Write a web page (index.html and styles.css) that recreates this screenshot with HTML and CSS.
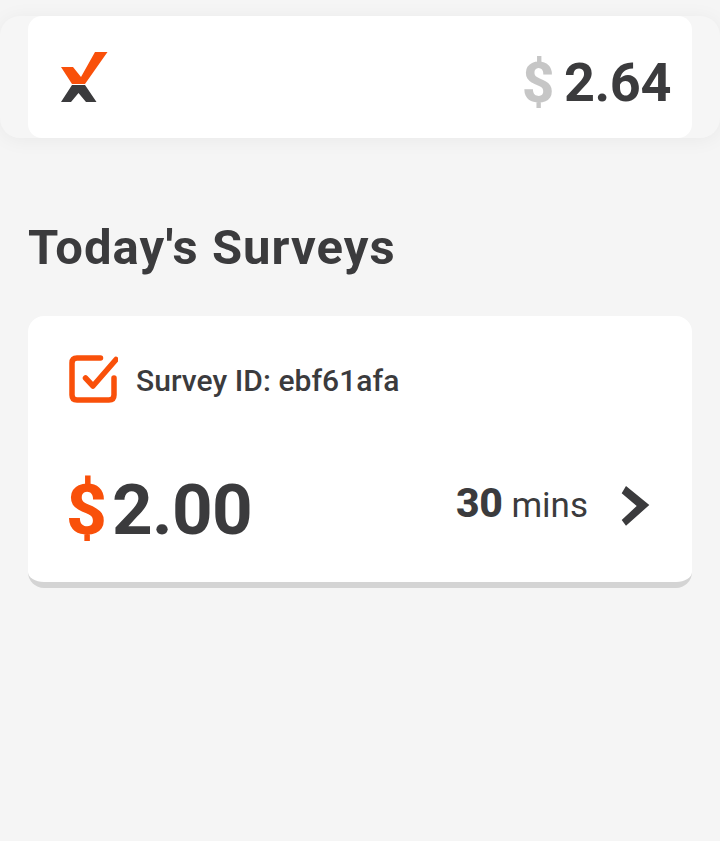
FILE: index.html
```html
<!DOCTYPE html>
<html lang="en">
<head>
<meta charset="utf-8">
<title>Today's Surveys</title>
<link rel="stylesheet" href="styles.css">
</head>
<body>
<header class="band">
  <div class="top-card">
    <svg class="logo" width="48" height="52" viewBox="60 51 48 52" aria-hidden="true">
      <path class="dark" d="M72 85H85L96.500 102H86L78.500 93L71 102H61Z"/>
      <path class="orange" d="M61 67H73L81 77L95 52H107.500L85 84H72Z"/>
    </svg>
    <div class="balance"><span class="cur">$</span><span class="bal">2.64</span></div>
  </div>
</header>
<main class="content">
  <h1 class="title">Today's Surveys</h1>
  <article class="survey">
    <div class="survey-id">
      <svg class="check" width="50" height="50" viewBox="68 354 50 50" aria-hidden="true">
        <path class="check-box" d="M100.500 358H77Q72 358 72 363V395Q72 400 77 400H109Q114 400 114 395V378"/>
        <path class="check-tick" d="M85.500 378L93 386L116 359.500"/>
      </svg>
      <span>Survey ID: ebf61afa</span>
    </div>
    <div class="survey-foot">
      <div class="price"><span class="price-cur">$</span><span class="amount">2.00</span></div>
      <div class="time"><b>30</b><span>mins</span></div>
      <svg class="arrow" width="32" height="42" viewBox="0 0 32 42" aria-hidden="true">
        <path d="M1.700 8.300L6 1L29.300 20L6 40.700L1.700 35L16.700 21Z"/>
      </svg>
    </div>
  </article>
</main>
</body>
</html>
```
FILE: styles.css
```css
* { box-sizing: border-box; }
html, body { margin: 0; padding: 0; }
body {
  width: 720px;
  height: 841px;
  overflow: hidden;
  padding-top: 16px;
  background: #f5f5f5;
  color: #3b3b3d;
  font-family: Roboto, "Liberation Sans", sans-serif;
}
.band {
  height: 122px;
  padding: 0 28px;
  border-radius: 20px;
  background: #f6f6f6;
  box-shadow: 0 2px 20px rgba(0, 0, 0, .05);
}
.top-card {
  height: 122px;
  display: flex;
  align-items: center;
  justify-content: space-between;
  padding: 0 21px 0 32px;
  background: #fff;
  border-radius: 14px;
}
.logo { display: block; }
.orange { fill: #f9500a; }
.dark { fill: #3b3b3d; }
.balance {
  display: flex;
  align-items: center;
  gap: 10px;
  margin-top: 12px;
  font-weight: 700;
  font-size: 54px;
  line-height: 60px;
  letter-spacing: -.4px;
}
.cur { color: #c6c6c6; font-size: 56px; font-weight: 800; }
.content { padding: 0 28px; }
.title {
  margin: 78px 0 0;
  font-size: 49px;
  line-height: 64px;
  font-weight: 700;
  letter-spacing: 1.05px;
}
.survey {
  height: 272px;
  margin-top: 36px;
  padding: 38px 40px 0;
  background: #fff;
  border-radius: 16px;
  border-bottom: 6px solid #d4d4d4;
}
.survey-id {
  display: flex;
  align-items: center;
  gap: 18px;
  height: 52px;
  font-size: 30px;
  font-weight: 500;
  letter-spacing: .05px;
}
.check { display: block; flex: none; align-self: flex-start; }
.check-box, .check-tick {
  fill: none;
  stroke: #f9500a;
  stroke-width: 5.5px;
  stroke-linecap: round;
  stroke-linejoin: round;
}
.survey-foot {
  display: flex;
  align-items: center;
  margin-top: 61px;
  height: 86px;
}
.price {
  display: flex;
  align-items: center;
  gap: 5px;
  margin-left: -2px;
  font-size: 71px;
  font-weight: 700;
  line-height: 86px;
}
.price-cur { color: #f9500a; font-weight: 800; }
.amount { letter-spacing: -.7px; }
.time {
  display: flex;
  align-items: baseline;
  gap: 9px;
  margin-left: auto;
  margin-bottom: 14px;
  font-size: 35px;
}
.time b { font-size: 41px; font-weight: 800; letter-spacing: -.5px; }
.arrow { display: block; margin-left: 32px; margin-bottom: 8px; }
.arrow path { fill: #3b3b3d; }
```
